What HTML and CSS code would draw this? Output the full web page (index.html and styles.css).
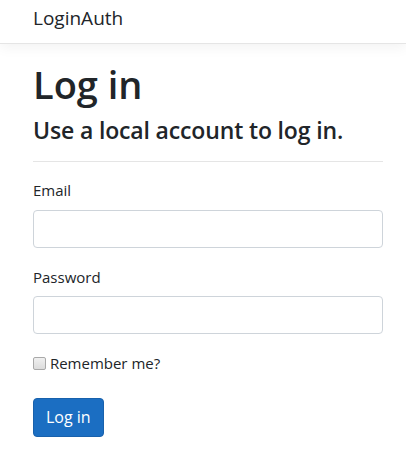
FILE: index.html
```html
<!DOCTYPE html>
<html>
<head>
  <title>Log in - LoginAuth</title>
  <link rel="stylesheet" href="styles.css">
</head>
<body>

<!-- Top navigation -->
<header class="navbar">
  <a class="brand" href="#">LoginAuth</a>
</header>

<main class="container">
  <h1>Log in</h1>
  <h4>Use a local account to log in.</h4>
  <hr>

  <form onsubmit="event.preventDefault();">
    <div class="form-group">
      <label for="email">Email</label>
      <input type="email" id="email" class="form-control">
    </div>
    <div class="form-group">
      <label for="password">Password</label>
      <input type="password" id="password" class="form-control">
    </div>
    <div class="form-group">
      <div class="checkbox">
        <label for="remember"><input type="checkbox" id="remember"> Remember me?</label>
      </div>
    </div>
    <div class="form-group">
      <button type="submit" class="btn-primary">Log in</button>
    </div>
  </form>
</main>

</body>
</html>
```

FILE: styles.css
```css
body {
  margin: 0;
  font-family: "Open Sans", "Noto Sans", Arial, sans-serif;
  font-size: 16px;
  line-height: 1.5;
  color: #212529;
  background-color: #fff;
}
.navbar {
  height: 44px;
  display: flex;
  align-items: center;
  padding: 0 33px;
  border-bottom: 1px solid #e5e5e5;
  box-shadow: 0 4px 12px rgba(0,0,0,0.05);
  margin-bottom: 16px;
  box-sizing: border-box;
}
.brand {
  font-size: 19px;
  color: #212529;
  text-decoration: none;
  margin-top: -6px;
}
.container {
  padding: 0 23px 0 33px;
}
h1 {
  font-size: 38px;
  font-weight: 600;
  line-height: 48px;
  margin: 0 0 8px;
}
h4 {
  font-size: 23px;
  font-weight: 600;
  letter-spacing: -0.15px;
  line-height: 29px;
  margin: 0 0 8px;
}
hr {
  margin: 16px 0;
  border: 0;
  border-top: 1px solid rgba(0,0,0,0.1);
}
.form-group {
  margin-bottom: 17px;
}
label {
  display: inline-block;
  font-size: 15px;
  margin-bottom: 8px;
}
.form-control {
  display: block;
  width: 100%;
  height: 38px;
  box-sizing: border-box;
  padding: 6px 12px;
  font-size: 16px;
  border: 1px solid #ced4da;
  border-radius: 4px;
  background-color: #fff;
}
.checkbox label {
  margin-bottom: 8px;
}
.checkbox input {
  -webkit-appearance: none;
  appearance: none;
  width: 13px;
  height: 13px;
  margin: 0;
  vertical-align: -1px;
  border: 1px solid #a9a9a9;
  border-radius: 2px;
  background: linear-gradient(#f0f0f0, #dcdcdc);
  box-sizing: border-box;
}
.btn-primary {
  font-family: inherit;
  font-size: 16px;
  line-height: 25px;
  padding: 6px 12px;
  color: #fff;
  background-color: #1b6ec2;
  border: 1px solid #1861ac;
  border-radius: 4px;
  margin-top: -2px;
}
```
